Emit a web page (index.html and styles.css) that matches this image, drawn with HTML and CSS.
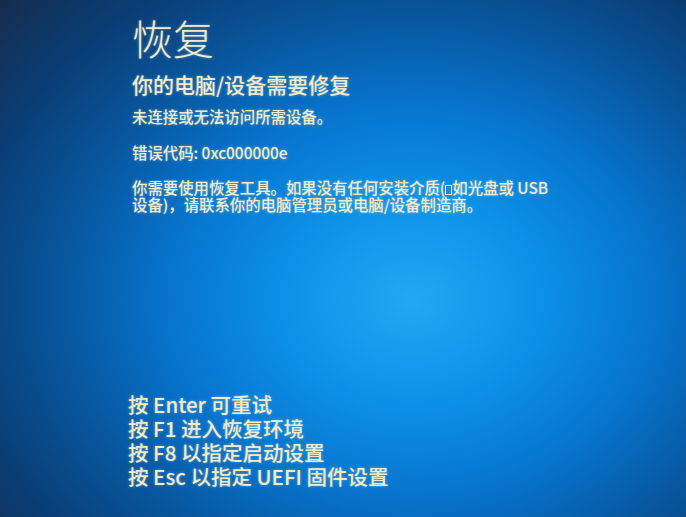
FILE: index.html
```html
<!DOCTYPE html>
<html lang="zh-CN">
<head>
<meta charset="utf-8">
<title>恢复</title>
<link rel="stylesheet" href="styles.css">
</head>
<body>
<main class="screen">
  <section class="top">
    <h1 class="title">恢复</h1>
    <h2 class="subtitle">你的电脑/设备需要修复</h2>
    <p class="msg">未连接或无法访问所需设备。</p>
    <p class="code">错误代码: 0xc000000e</p>
    <p class="para">你需要使用恢复工具。如果没有任何安装介质(<span class="tofu"></span>如光盘或 USB<br>设备)，请联系你的电脑管理员或电脑/设备制造商。</p>
  </section>
  <ul class="keys">
    <li>按 Enter 可重试</li>
    <li>按 F1 进入恢复环境</li>
    <li>按 F8 以指定启动设置</li>
    <li>按 Esc 以指定 UEFI 固件设置</li>
  </ul>
</main>
</body>
</html>
```

FILE: styles.css
```css
html, body {
  margin: 0;
  padding: 0;
  width: 686px;
  height: 517px;
  overflow: hidden;
}

body {
  font-family: "Noto Sans CJK SC", "Noto Sans", sans-serif;
  color: #f1ebc9;
  background:
    radial-gradient(ellipse 82% 88% at 60% 58%, #22a8f5 0%, #0c8fe6 24%, #0773cc 44%, #08579f 62%, #0a3e76 80%, rgba(10,40,80,0) 100%),
    linear-gradient(90deg, #182a48 0%, #0b2c5a 40%, #0a2744 75%, #0a1a2e 100%);
}

.screen {
  height: 517px;
  box-sizing: border-box;
  display: flex;
  flex-direction: column;
  justify-content: space-between;
  padding: 13px 0 29px 128px;
  text-shadow: 0 0 3px rgba(255, 250, 220, 0.4);
}

.top {
  padding-left: 4px;
}

.title {
  margin: 0;
  font-size: 41px;
  line-height: 48px;
  font-weight: 300;
}

.subtitle {
  margin: 10px 0 0;
  font-size: 21px;
  line-height: 26px;
  font-weight: 500;
}

.msg {
  margin: 9px 0 0;
  font-size: 15.4px;
  line-height: 20px;
  font-weight: 500;
}

.code {
  margin: 16px 0 0;
  font-size: 15.4px;
  line-height: 20px;
  font-weight: 500;
}

.para {
  margin: 17px 0 0;
  font-size: 15.4px;
  line-height: 17px;
  font-weight: 500;
}

.tofu {
  display: inline-block;
  width: 7px;
  height: 10px;
  border: 1.5px solid #f1ebc9;
  box-sizing: border-box;
  vertical-align: -1px;
}

.keys {
  list-style: none;
  margin: 0;
  padding: 0;
  font-size: 20.5px;
  line-height: 24px;
  font-weight: 500;
}
```
